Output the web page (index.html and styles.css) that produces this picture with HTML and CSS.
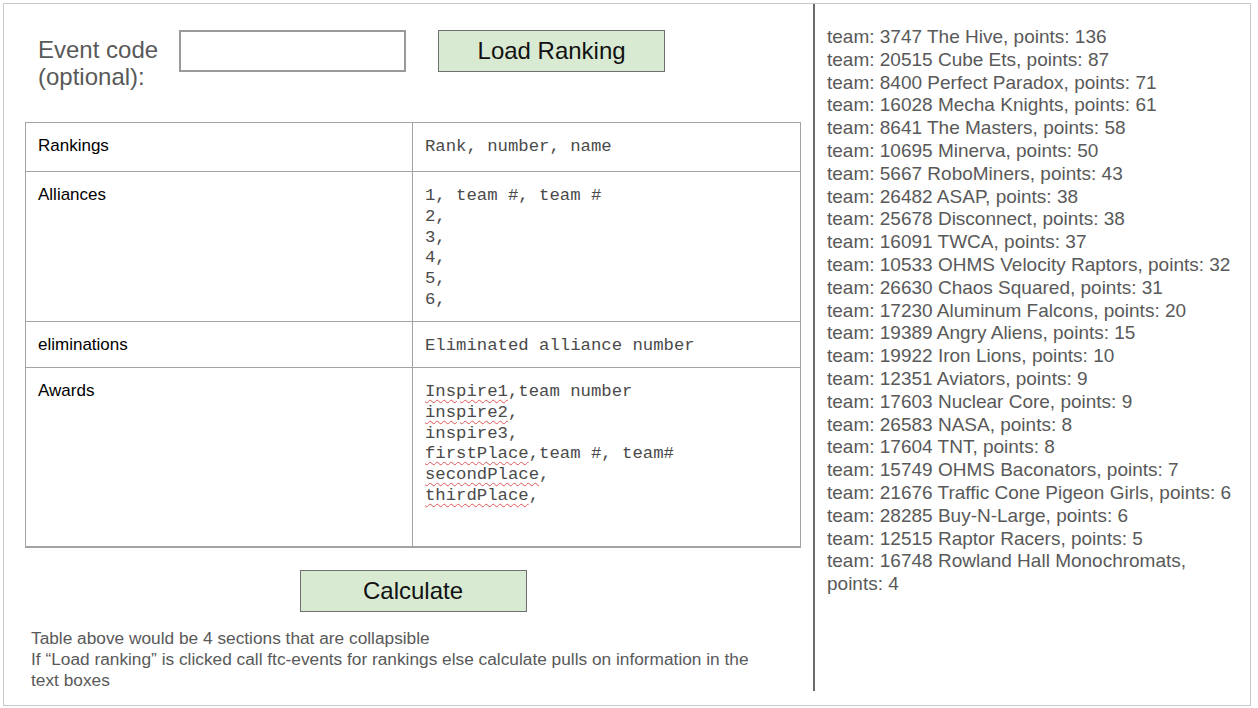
FILE: index.html
```html
<!DOCTYPE html>
<html lang="en">
<head>
<meta charset="utf-8">
<title>Ranking calculator</title>
<link rel="stylesheet" href="styles.css">
</head>
<body>
<div class="frame">
  <div class="left">
    <div class="top">
      <div class="label">Event code<br>(optional):</div>
      <div class="input"></div>
      <div class="btn load">Load Ranking</div>
    </div>
    <div class="tbl">
      <div class="cell name">Rankings</div>
      <div class="cell mono">Rank, number, name</div>
      <div class="cell name">Alliances</div>
      <div class="cell mono">1, team #, team #<br>2,<br>3,<br>4,<br>5,<br>6,</div>
      <div class="cell name">eliminations</div>
      <div class="cell mono">Eliminated alliance number</div>
      <div class="cell name">Awards</div>
      <div class="cell mono"><span class="sp">Inspire1</span>,team number<br><span class="sp">inspire2</span>,<br>inspire3,<br><span class="sp">firstPlace</span>,team #, team#<br><span class="sp">secondPlace</span>,<br><span class="sp">thirdPlace</span>,</div>
    </div>
    <div class="calcwrap"><div class="btn calc">Calculate</div></div>
    <div class="note">Table above would be 4 sections that are collapsible<br>If “Load ranking” is clicked call ftc-events for rankings else calculate pulls on information in the text boxes</div>
  </div>
  <div class="right">
    <div class="list">
      team: 3747 The Hive, points: 136<br>
      team: 20515 Cube Ets, points: 87<br>
      team: 8400 Perfect Paradox, points: 71<br>
      team: 16028 Mecha Knights, points: 61<br>
      team: 8641 The Masters, points: 58<br>
      team: 10695 Minerva, points: 50<br>
      team: 5667 RoboMiners, points: 43<br>
      team: 26482 ASAP, points: 38<br>
      team: 25678 Disconnect, points: 38<br>
      team: 16091 TWCA, points: 37<br>
      team: 10533 OHMS Velocity Raptors, points: 32<br>
      team: 26630 Chaos Squared, points: 31<br>
      team: 17230 Aluminum Falcons, points: 20<br>
      team: 19389 Angry Aliens, points: 15<br>
      team: 19922 Iron Lions, points: 10<br>
      team: 12351 Aviators, points: 9<br>
      team: 17603 Nuclear Core, points: 9<br>
      team: 26583 NASA, points: 8<br>
      team: 17604 TNT, points: 8<br>
      team: 15749 OHMS Baconators, points: 7<br>
      team: 21676 Traffic Cone Pigeon Girls, points: 6<br>
      team: 28285 Buy-N-Large, points: 6<br>
      team: 12515 Raptor Racers, points: 5<br>
      team: 16748 Rowland Hall Monochromats, points: 4
    </div>
  </div>
</div>
</body>
</html>
```
FILE: styles.css
```css
html, body {
  margin: 0;
  padding: 0;
  background: #ffffff;
}
body {
  font-family: "Liberation Sans", Arial, sans-serif;
}
.frame {
  margin: 3px 0 0 3px;
  width: 1248px;
  height: 703px;
  box-sizing: border-box;
  border: 1px solid #c5c8ce;
  display: flex;
  align-items: flex-start;
}
.left {
  width: 809px;
  flex: none;
  box-sizing: border-box;
  padding-left: 21px;
  display: flex;
  flex-direction: column;
}
.top {
  height: 118px;
  padding-top: 26px;
  box-sizing: border-box;
  display: flex;
  align-items: flex-start;
}
.label {
  margin-left: 13px;
  margin-top: 6px;
  font-size: 24px;
  line-height: 27px;
  color: #595959;
}
.input {
  margin-left: 21px;
  width: 227px;
  height: 42px;
  box-sizing: border-box;
  border: 2px solid #9a9a9a;
  background: #fff;
}
.btn {
  width: 227px;
  height: 42px;
  box-sizing: border-box;
  border: 1.5px solid #6f6f6f;
  background: #d9ead3;
  color: #111;
  font-size: 24px;
  display: flex;
  align-items: center;
  justify-content: center;
}
.load {
  margin-left: 32px;
}
.tbl {
  width: 776px;
  display: grid;
  grid-template-columns: 386px 387px;
  grid-template-rows: 48px 149px 45px 178px;
  gap: 1px;
  background: #a3a3a3;
  border: 1px solid #a3a3a3;
  box-sizing: border-box;
  height: 426px;
}
.cell {
  background: #fff;
  padding: 13px 0 0 12px;
}
.name {
  font-size: 17px;
  line-height: 20px;
  color: #000;
}
.mono {
  padding-top: 14px;
  font-family: "Liberation Mono", "Courier New", monospace;
  font-size: 17.3px;
  line-height: 20.8px;
  color: #4a4a4a;
}
.sp {
  text-decoration: underline wavy #e05555;
  text-decoration-thickness: 1px;
  text-underline-offset: 3px;
}
.calcwrap {
  width: 776px;
  margin-top: 22px;
  display: flex;
  justify-content: center;
}
.note {
  margin-top: 16px;
  margin-left: 6px;
  width: 740px;
  font-size: 17.3px;
  line-height: 21px;
  color: #595959;
}
.right {
  flex: none;
  height: 687px;
  border-left: 2px solid #6b6b6b;
  box-sizing: border-box;
  padding: 22px 0 0 12px;
}
.list {
  width: 411px;
  font-size: 19px;
  line-height: 22.8px;
  color: #595959;
}
```
